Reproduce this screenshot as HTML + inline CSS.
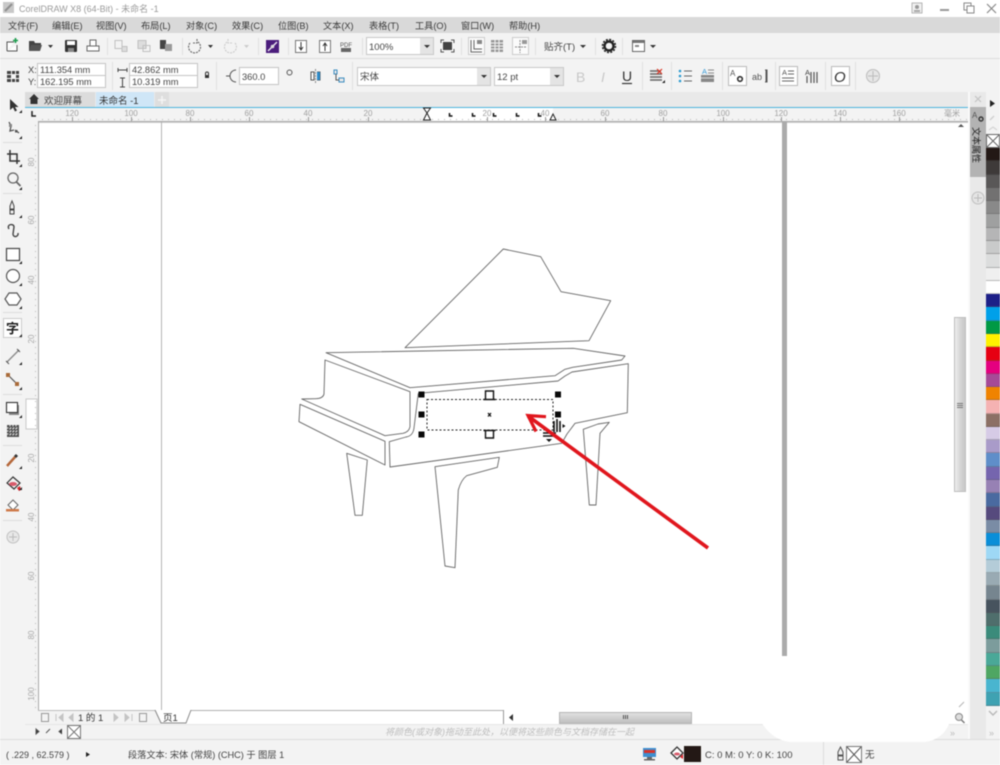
<!DOCTYPE html>
<html><head><meta charset="utf-8"><title>CorelDRAW X8</title>
<style>
html,body{margin:0;padding:0;width:1000px;height:765px;overflow:hidden;background:#fff}
#w{position:absolute;left:0;top:0;width:1000px;height:765px;filter:blur(.5px)}
svg{position:absolute;left:0;top:0}
svg text{font-family:"Liberation Sans","Noto Sans CJK SC",sans-serif}
#p{position:absolute;left:986px;top:148px;width:14px;height:558px;display:flex;flex-direction:column}
#p div{flex:1;box-sizing:border-box;border-bottom:1px solid rgba(90,90,90,.35)}
</style></head><body><div id="w">
<svg width="1000" height="765" viewBox="0 0 1000 765">
<!-- chrome backgrounds -->
<rect width="1000" height="17" fill="#fff"/>
<rect y="17" width="1000" height="16" fill="#d9d9d9"/>
<rect y="33" width="1000" height="59" fill="#f3f3f3"/>
<line x1="0" x2="1000" y1="58.5" y2="58.5" stroke="#dcdcdc"/>
<rect y="92" width="970" height="15" fill="#e9e9e9"/>
<rect y="92" x="0" width="25" height="650" fill="#f3f3f3"/>
<rect x="25" y="107" width="945" height="1" fill="#4db5de"/>
<rect x="25" y="108" width="945" height="14" fill="#f3f3f3"/>
<rect x="25" y="108" width="13" height="616" fill="#f3f3f3"/>
<rect x="38" y="121" width="930" height="1" fill="#a8a8a8"/>
<rect x="38" y="122" width="930" height="1" fill="#cfcfcf"/>
<rect x="38" y="122" width="1" height="588" fill="#a8a8a8"/>
<!-- title bar -->
<rect x="3" y="2" width="11" height="11" fill="#c8c8c8"/><path d="M5 11L12 4" stroke="#8f8f8f" stroke-width="2"/>
<text x="19" y="12" font-size="9" fill="#9a9a9a">CorelDRAW X8 (64-Bit) - 未命名 -1</text>
<rect x="912" y="3" width="10" height="10" fill="#f0f0f0" stroke="#b5b5b5"/><circle cx="917" cy="7" r="2" fill="#999"/><rect x="914" y="10" width="6" height="2" fill="#aaa"/>
<rect x="940" y="9" width="9" height="2" fill="#999"/>
<rect x="964" y="3" width="7" height="7" fill="none" stroke="#888"/><rect x="967" y="6" width="7" height="7" fill="#fff" stroke="#888"/>
<path d="M987 4l9 9M996 4l-9 9" stroke="#888" stroke-width="1.200"/>
<!-- menu -->
<g font-size="9.200" fill="#3a3a3a">
<text x="8" y="29">文件(F)</text><text x="52" y="29">编辑(E)</text><text x="96" y="29">视图(V)</text><text x="141" y="29">布局(L)</text><text x="186" y="29">对象(C)</text><text x="232" y="29">效果(C)</text><text x="278" y="29">位图(B)</text><text x="323" y="29">文本(X)</text><text x="369" y="29">表格(T)</text><text x="415" y="29">工具(O)</text><text x="461" y="29">窗口(W)</text><text x="509" y="29">帮助(H)</text>
</g>
<!-- std toolbar -->
<g stroke="#e0e0e0"><path d="M107.500 38V55M182.500 38V55M258.500 38V55M288.500 38V55M362.500 38V55M461.500 38V55M535.500 38V55M595.500 38V55M622.500 38V55"/></g>
<path d="M7 51V42h7M7 51h10V45" fill="#fff" stroke="#555"/><path d="M15.500 38v5M13 40.500h5" stroke="#1a9b4c" stroke-width="1.600"/>
<path d="M29 51V41h5l1 2h6v2h-9l-1 6z" fill="#444"/><path d="M29 51l2-6h11l-2 6z" fill="#555"/><path d="M48 45h5l-2.500 3z" fill="#333"/>
<rect x="65" y="40" width="12" height="12" rx="1" fill="#333"/><rect x="67" y="41" width="8" height="4" fill="#fff"/><rect x="68" y="48" width="6" height="4" fill="#888"/>
<path d="M90 46V40h6v6M87 46h12v5H87z" fill="#fff" stroke="#666"/>
<g fill="none" stroke="#c0c0c0"><rect x="115" y="40.500" width="7" height="8"/><rect x="122" y="46.500" width="5" height="5" fill="#ddd"/><rect x="138" y="40.500" width="8" height="8" fill="#ddd"/><rect x="143" y="45.500" width="7" height="6"/></g>
<rect x="160" y="40" width="6" height="9" fill="#444"/><rect x="165" y="44" width="7" height="7" fill="#999"/>
<path d="M190 43a6 6 0 1 0 8-1M197 39v4h-4" fill="none" stroke="#666" stroke-width="1.100" stroke-dasharray="2 1"/><path d="M208 45h5l-2.500 3z" fill="#333"/>
<path d="M235 43a6 6 0 1 1-8-1M228 39v4h4" fill="none" stroke="#ccc" stroke-width="1.100" stroke-dasharray="2 1"/><path d="M244 45h5l-2.500 3z" fill="#ccc"/>
<rect x="266" y="40" width="13" height="13" fill="#4b1d7c"/><path d="M268 51l9-9" stroke="#e8e2ef" stroke-width="1.500"/><circle cx="272.500" cy="46.500" r="1.800" fill="#ddd"/>
<g fill="#fff" stroke="#777"><rect x="295.500" y="40.500" width="11" height="12"/><rect x="319.500" y="40.500" width="11" height="12"/></g>
<path d="M301 42v7M299 47l2 3 2-3M325 51v-7M323 46l2-3 2 3" stroke="#333" fill="none"/>
<text x="340" y="47" font-size="6" fill="#555">PDF</text><rect x="341" y="48" width="10" height="4" fill="#666"/>
<rect x="366.500" y="37.500" width="67" height="17" fill="#fff" stroke="#c8c8c8"/><rect x="420" y="38" width="13" height="16" fill="#e4e4e4"/><path d="M424 45h6l-3 3z" fill="#333"/>
<text x="369" y="50" font-size="9.500" fill="#444">100%</text>
<rect x="443" y="42" width="9" height="8" fill="#444"/><path d="M441 43v-3h3M451 40h3v3M454 49v3h-3M444 52h-3v-3" fill="none" stroke="#555"/>
<rect x="468.500" y="37.500" width="16" height="17" fill="#fbfbfb" stroke="#ccc"/><path d="M471 40v12h11M474 40v9h8" stroke="#666" fill="none"/><rect x="477" y="40" width="5" height="4" fill="#888"/>
<path d="M491 40h12v12h-12z" fill="#999"/><path d="M491 43h12M491 46h12M491 49h12M495 40v12M499 40v12" stroke="#f3f3f3"/>
<rect x="512.500" y="37.500" width="16" height="17" fill="#fbfbfb" stroke="#ccc"/><path d="M520 40v13M515 47h11" stroke="#888" fill="none" stroke-dasharray="2 1"/><rect x="522" y="40" width="5" height="4" fill="#999"/>
<text x="544" y="50" font-size="9.500" fill="#444">贴齐(T)</text><path d="M580 45h6l-3 3z" fill="#333"/>
<circle cx="609" cy="46" r="4.500" fill="none" stroke="#222" stroke-width="2.400"/><circle cx="609" cy="46" r="6.500" fill="none" stroke="#222" stroke-width="1.500" stroke-dasharray="2 1.400"/>
<rect x="632.500" y="40.500" width="12" height="11" fill="#fff" stroke="#666"/><rect x="633" y="41" width="11" height="2" fill="#777"/><rect x="635" y="45" width="4" height="2" fill="#888"/><path d="M650 45h6l-3 3z" fill="#333"/>
<!-- property bar -->
<g stroke="#e0e0e0"><path d="M112.500 62V90M216.500 62V90M352.500 62V90M642.500 62V90M671.500 62V90M722.500 62V90M775.500 62V90M825.500 62V90M855.500 62V90"/></g>
<g fill="#444"><rect x="7" y="71" width="4" height="3"/><rect x="12" y="71" width="3" height="3"/><rect x="16" y="71" width="3" height="3"/><rect x="7" y="75" width="4" height="3"/><rect x="16" y="75" width="3" height="3"/><rect x="7" y="79" width="4" height="3"/><rect x="12" y="79" width="3" height="3"/><rect x="16" y="79" width="3" height="3"/></g>
<g fill="#fff" stroke="#c4c4c4"><rect x="37.500" y="63.500" width="68" height="12"/><rect x="37.500" y="75.500" width="68" height="12"/><rect x="129.500" y="63.500" width="68" height="12"/><rect x="129.500" y="75.500" width="68" height="12"/><rect x="239.500" y="67.500" width="39" height="17"/></g>
<g font-size="9.300" fill="#444"><text x="28" y="73">X:</text><text x="28" y="85">Y:</text><text x="40" y="73">111.354 mm</text><text x="40" y="85">162.195 mm</text><text x="132" y="73">42.862 mm</text><text x="132" y="85">10.319 mm</text><text x="242" y="80">360.0</text></g>
<path d="M118 70h9M118 68v4M127 68v4M122.500 78v9M120 78h5M120 87h5" stroke="#444" fill="none"/>
<rect x="205" y="75" width="4" height="3" fill="#333"/><path d="M205.500 75v-1.500a1.500 1.500 0 0 1 3 0V75" stroke="#333" fill="none"/>
<path d="M236 70a6 6 0 1 0 0 12" fill="none" stroke="#555"/><path d="M226 76h4" stroke="#555"/>
<circle cx="289.500" cy="72.500" r="2.500" fill="none" stroke="#555"/>
<path d="M311 72h3v8h-3zM317 72h3v8h-3" fill="#fff" stroke="#555"/><rect x="317" y="72" width="3" height="8" fill="#2b89c8"/><path d="M315.500 69v14" stroke="#888" stroke-dasharray="2 1"/>
<path d="M334 70h3v4h-3zM339 78h5v4h-5z" fill="#e8e8e8" stroke="#3b8cc0"/><path d="M336 74v6h3" stroke="#555" fill="none"/>
<rect x="357.500" y="67.500" width="133" height="18" fill="#fff" stroke="#c8c8c8"/><rect x="477" y="68" width="13" height="17" fill="#e4e4e4"/><path d="M481 75h6l-3 3z" fill="#333"/>
<text x="360" y="80" font-size="9.500" fill="#444">宋体</text>
<rect x="494.500" y="67.500" width="69" height="18" fill="#fff" stroke="#c8c8c8"/><rect x="550" y="68" width="13" height="17" fill="#e4e4e4"/><path d="M554 75h6l-3 3z" fill="#333"/>
<text x="497" y="80" font-size="9.500" fill="#444">12 pt</text>
<text x="576" y="82" font-size="14" fill="#c8c8c8">B</text>
<text x="601" y="82" font-size="14" fill="#c8c8c8" font-style="italic">I</text>
<text x="622" y="81" font-size="14" fill="#333">U</text><path d="M622 83.500h10" stroke="#333" stroke-width="1.200"/>
<path d="M650 71h11M650 74h12M650 77h12M650 80h12" stroke="#666" stroke-width="1.500"/><path d="M657 69l5 5M662 69l-5 5" stroke="#d32" stroke-width="1.200"/><path d="M662 83l3-3v3z" fill="#222"/>
<circle cx="680" cy="71" r="1.300" fill="#2b9ad0"/><circle cx="680" cy="76" r="1.300" fill="#2b9ad0"/><circle cx="680" cy="81" r="1.300" fill="#2b9ad0"/><path d="M684 71h8M684 76h8M684 81h8" stroke="#666"/>
<text x="702" y="74" font-size="7.500" fill="#3a9bd6">A</text><path d="M708 70h6M708 73h6" stroke="#888"/><rect x="701" y="75" width="13" height="7" fill="#888"/><path d="M701 78h13" stroke="#ddd"/>
<rect x="728.500" y="66.500" width="18" height="19" fill="#fff" stroke="#bbb"/><text x="730" y="76" font-size="8" fill="#555">A</text><circle cx="740" cy="79" r="2.300" fill="none" stroke="#333" stroke-width="1.600"/>
<text x="752" y="80" font-size="9" fill="#555">ab</text><path d="M765 70h2v12h-2M766 70v12" stroke="#555" fill="none"/>
<rect x="779.500" y="66.500" width="18" height="19" fill="#fff" stroke="#bbb"/><text x="782" y="75" font-size="7.500" fill="#555">A</text><path d="M788 71h6M788 74h6M782 78h12M782 81h12" stroke="#666"/>
<text x="805" y="75" font-size="7.500" fill="#444">A</text><path d="M807 76v7M811 72v11M814 72v11M817 72v11" stroke="#555" stroke-width="1.200"/>
<rect x="831.500" y="66.500" width="18" height="19" fill="#fff" stroke="#bbb"/><text x="834" y="82" font-size="15" fill="#333" font-style="italic">O</text>
<circle cx="873" cy="76" r="6.500" fill="#e6e6e6" stroke="#bcbcbc"/><path d="M873 71v10M868 76h10" stroke="#bcbcbc"/>
<!-- tabs -->
<rect x="25" y="92" width="70" height="15" fill="#dcdcdc"/><rect x="96" y="92" width="58" height="15" fill="#cfe6f7"/><rect x="155" y="92" width="14" height="15" fill="#dedede"/>
<path d="M29 99l5-5 5 5h-1.500v5h-7v-5z" fill="#333"/>
<text x="44" y="104" font-size="9.500" fill="#444">欢迎屏幕</text><text x="99" y="104" font-size="9.500" fill="#333">未命名 -1</text><path d="M162 96v8M158 100h8" stroke="#f5f5f5" stroke-width="1.500"/>
<!-- rulers -->
<path d="M32 111v5h4" stroke="#222" stroke-width="1.500" fill="none"/>
<rect x="427" y="108" width="126" height="13" fill="#fff"/>
<g font-size="8" fill="#a0a0a0" text-anchor="middle"><text x="72" y="116">120</text><text x="131" y="116">100</text><text x="190" y="116">80</text><text x="249" y="116">60</text><text x="308" y="116">40</text><text x="368" y="116">20</text><text x="487" y="116">20</text><text x="545" y="116">40</text><text x="605" y="116">60</text><text x="663" y="116">80</text><text x="723" y="116">100</text><text x="781" y="116">120</text><text x="840" y="116">140</text><text x="899" y="116">160</text><text x="952" y="116">毫米</text></g>
<path d="M42 119.500H968" stroke="#b8b8b8" stroke-dasharray="1 5" fill="none"/>
<path d="M72.500 117v4M131.500 117v4M190.500 117v4M249.500 117v4M308.500 117v4M368.500 117v4M487.500 117v4M545.500 117v4M605.500 117v4M663.500 117v4M723.500 117v4M781.500 117v4M840.500 117v4M899.500 117v4" stroke="#999"/>
<rect x="783" y="121" width="4" height="2" fill="#aaa"/>
<path d="M423.500 108h7l-3.500 5zM427 113l-3.500 7h7z" fill="#fff" stroke="#222"/>
<path d="M550 120l3-6 3 6z" fill="#fff" stroke="#222"/>
<g stroke="#111" stroke-width="1.500" fill="none"><path d="M449.500 113v3h3M472.500 113v3h3M493.500 113v3h3M516.500 113v3h3M538.500 113v3h3"/></g>
<rect x="26" y="399" width="11" height="30" fill="#fff" stroke="#c8c8c8"/>
<g font-size="8" fill="#a8a8a8" text-anchor="middle">
<text transform="translate(34,162) rotate(-90)">80</text><text transform="translate(34,220) rotate(-90)">60</text><text transform="translate(34,280) rotate(-90)">40</text><text transform="translate(34,339) rotate(-90)">20</text><text transform="translate(34,458) rotate(-90)">20</text><text transform="translate(34,517) rotate(-90)">40</text><text transform="translate(34,576) rotate(-90)">60</text><text transform="translate(34,635) rotate(-90)">80</text><text transform="translate(34,694) rotate(-90)">100</text></g>
<path d="M35.500 125V708" stroke="#bbb" stroke-dasharray="1 5" fill="none"/>
<!-- page -->
<rect x="161" y="122" width="1" height="588" fill="#b4b4b4"/>
<rect x="782" y="122" width="5" height="534" fill="#ababab"/>
<!-- toolbox -->
<g stroke="#dcdcdc"><path d="M3 142.500h19M3 193.500h19M3 312.500h19M3 394.500h19M3 445.500h19M3 520.500h19"/></g>
<path d="M10 99l0 11 3-2.500 2 4 2-1-2-3.500h3.500z" fill="#333"/>
<path d="M9 122l2 4-1 5 4-1M15 130l4 3" stroke="#555" fill="none" stroke-width="1.300"/><rect x="9" y="124" width="3" height="3" fill="#888"/><rect x="15" y="130" width="2.500" height="2.500" fill="#555"/>
<path d="M10 150v11h10M7 154h10v10" stroke="#333" fill="none" stroke-width="1.500"/>
<circle cx="13" cy="178" r="5" fill="none" stroke="#666" stroke-width="1.300"/><path d="M16.500 182l4 4" stroke="#666" stroke-width="1.800"/>
<path d="M10 206l2-5 2 5v3h-4zM10 210h4v4h-4z" fill="#eee" stroke="#444"/>
<path d="M9 229c-3-5 5-6 5-2l-1 7c0 4 6 3 5-1" fill="none" stroke="#444" stroke-width="1.400"/>
<rect x="6.500" y="248.500" width="13" height="12" fill="#fff" stroke="#444" stroke-width="1.200"/>
<circle cx="13" cy="276" r="6.500" fill="#fff" stroke="#555" stroke-width="1.200"/>
<path d="M9 293h8l4 6-4 6H9l-4-6z" fill="#fff" stroke="#555" stroke-width="1.200"/>
<rect x="3.500" y="318.500" width="18" height="19" fill="#fff" stroke="#ccc"/><text x="6" y="333" font-size="13" fill="#222" font-weight="bold">字</text>
<path d="M7 362l12-12" stroke="#888" stroke-width="1.300"/><path d="M6 361l3 3M17 349l3 3" stroke="#555"/>
<path d="M8 375l9 9" stroke="#555" stroke-width="1.200"/><rect x="6" y="373" width="4" height="4" fill="#a96b3a"/><rect x="15" y="382" width="4" height="4" fill="#a96b3a"/>
<rect x="9" y="405" width="10" height="10" fill="#888"/><rect x="6.500" y="402.500" width="11" height="10" fill="#fff" stroke="#333" stroke-width="1.100"/>
<rect x="7" y="425" width="12" height="12" fill="#555"/><path d="M7 428h12M7 431h12M7 434h12M10 425v12M13 425v12M16 425v12" stroke="#ddd" stroke-dasharray="1.500 1.500"/>
<path d="M7 466l8-9" stroke="#b5673a" stroke-width="2.500"/><path d="M15 457l2-2" stroke="#333" stroke-width="3"/>
<path d="M7 483l6-6 7 6-6 6z" fill="#f3f3f3" stroke="#333" stroke-width="1.200"/><ellipse cx="13" cy="484" rx="4" ry="2" fill="#d85a6a"/><path d="M17 488l3-2 1 4-2 1z" fill="#d8232a"/>
<path d="M8 505l5-5 5 5-5 5z" fill="#fff" stroke="#666"/><rect x="6" y="509" width="13" height="2.500" fill="#cf7a4a"/>
<circle cx="13" cy="537" r="6" fill="#e8e8e8" stroke="#c0c0c0"/><path d="M13 533v8M9 537h8" stroke="#bbb"/>
<g fill="#222"><path d="M22 110v3h-3zM22 136v3h-3zM22 164v3h-3zM22 187v3h-3zM22 215v3h-3zM22 261v3h-3zM22 283v3h-3zM22 306v3h-3zM22 334v3h-3zM22 362v3h-3zM22 387v3h-3zM22 415v3h-3zM22 466v3h-3zM22 487v3h-3z"/></g>
<!-- piano -->
<g fill="none" stroke="#666" stroke-width=".9" stroke-linejoin="round">
<path d="M503.300 249L540.700 256.700 561 291.700 610.700 300.700 589 340.700 405 347.700Z"/>
<path d="M326 352.700L573.300 348.300 625 356 621.700 360 572.700 367.300 565 369.300 555 375.700 410 387.700Z"/>
<path d="M325 360L410 391.700V426.700Q409 432 403 433.300L385 435.700 301.700 399 316 398.700Q323 398.500 324 394Z"/>
<path d="M300 404.300L385 441.300V465L299 421.700Z"/>
<path d="M418.300 393.300L414 428Q413 436 406 437L389.300 441.700 390 467 561.700 443.300 567 434 575 423.300 627.300 412.700 628.300 363.700 572 372 565 376 558 381 418.300 393.300"/>
<path d="M346.700 453.300L367.300 460 362.300 515.300H355Z"/>
<path d="M435 466.700L499.300 457.300 497.300 467.300 466.700 475.700Q461 480 458.300 490L455 567.700 445 566Z"/>
<path d="M583.300 429.300L598 424 609.300 422.300 600 433.300 596 505H589.300Z"/>
</g>
<!-- selection -->
<rect x="427" y="399.500" width="126" height="30.500" fill="none" stroke="#222" stroke-dasharray="2 2"/>
<g fill="#0a0a0a"><rect x="418.500" y="391.500" width="6" height="6"/><rect x="418.500" y="411.500" width="6" height="6"/><rect x="418.500" y="431.500" width="6" height="6"/><rect x="555" y="391.500" width="6" height="6"/><rect x="555" y="411.500" width="6" height="6"/></g>
<path d="M488 413l3 3.500M491 413l-3 3.500" stroke="#111" stroke-width="1.300"/>
<path d="M485.500 399.500V391h8v8.500M483.500 399.500h12M483.500 430.500h12M485.500 430.500V438h8v-7.500" fill="#fff" stroke="#111" stroke-width="1.400"/>
<path d="M554 421v11M557 419v13M560 421v11" stroke="#111" stroke-width="1.600"/><path d="M562.500 424l3 2-3 2z" fill="#111"/>
<path d="M543 433h13M543 436h13" stroke="#111" stroke-width="1.500"/><path d="M546 439h6l-3 3z" fill="#111"/>
<!-- red arrow -->
<path d="M708 548L528 416" stroke="#e0161d" stroke-width="3.600" fill="none"/>
<path d="M546 416.700L528 415.500 536 431.500" stroke="#e0161d" stroke-width="3.200" fill="none"/>
<!-- right scroll + dock -->
<rect x="968" y="92" width="32" height="648" fill="#f3f3f3"/>
<rect x="968" y="92" width="2" height="648" fill="#fafafa"/>
<rect x="970" y="92" width="16" height="648" fill="#e9e9e9"/>
<rect x="970" y="107" width="16" height="70" fill="#b3b3b3"/>
<path d="M975 96l6 6M981 96l-6 6" stroke="#c4c4c4" stroke-width="1.200"/>
<text x="972" y="118" font-size="8" fill="#555">A</text><circle cx="981" cy="119" r="2" fill="none" stroke="#333" stroke-width="1.400"/>
<text transform="translate(973,127) rotate(90)" font-size="9" fill="#222">文本属性</text>
<circle cx="978" cy="198" r="6" fill="#e4e4e4" stroke="#bfbfbf"/><path d="M978 194v8M974 198h8" stroke="#bbb"/>
<path d="M990 100l5 3.500-5 3.500z" fill="#222"/>
<path d="M990 120l4-4" stroke="#d0d0d0" stroke-width="1.500"/>
<path d="M989 130l4-3 4 3" stroke="#d5d5d5" fill="none" stroke-width="1.200"/>
<rect x="986.500" y="134.500" width="13" height="13" fill="#fff" stroke="#666"/><path d="M987 135l12 12M999 135l-12 12" stroke="#666"/>
<path d="M989 711l4 4 4-4" stroke="#b8b8b8" fill="none" stroke-width="1.400"/><text x="989" y="736" font-size="9" fill="#bbb">»</text>
<defs><linearGradient id="g" x1="0" x2="1" y1="0" y2="0"><stop offset="0" stop-color="#f0f0f0"/><stop offset=".6" stop-color="#d2d2d2"/><stop offset="1" stop-color="#c8c8c8"/></linearGradient>
<linearGradient id="h" x1="0" x2="0" y1="0" y2="1"><stop offset="0" stop-color="#e2e2e2"/><stop offset="1" stop-color="#bdbdbd"/></linearGradient></defs>
<rect x="954.500" y="317.500" width="11" height="174" fill="url(#g)" stroke="#bdbdbd"/>
<path d="M957 403.500h6M957 405.500h6M957 407.500h6" stroke="#777" fill="none"/>
<path d="M958 127l3-3 3 3z" fill="#555"/>
<!-- bottom -->
<rect x="25" y="710" width="136" height="14" fill="#f3f3f3"/>
<rect x="161" y="710" width="342" height="1" fill="#b0b0b0"/>
<rect x="503" y="710" width="1" height="14" fill="#999"/>
<rect x="38" y="710" width="123" height="1" fill="#bdbdbd"/>
<g fill="none" stroke="#999"><rect x="41.500" y="713.500" width="7" height="8"/><rect x="139.500" y="713.500" width="7" height="8"/></g>
<path d="M56 714v7M63 714l-4 3.500 4 3.500zM73 714l-4 3.500 4 3.500zM114 714l4 3.500-4 3.500zM125 714l4 3.500-4 3.500zM132 714v7" fill="#c4c4c4" stroke="#c4c4c4"/>
<text x="78" y="721" font-size="9.500" fill="#333">1 的 1</text>
<path d="M155 710l6 13h25l5-13" fill="#fff" stroke="#888"/><text x="163" y="721" font-size="9.500" fill="#333">页1</text>
<path d="M513 714v7l-4-3.500z" fill="#333"/>
<rect x="559.500" y="712.500" width="132" height="11" fill="url(#h)" stroke="#b5b5b5"/><path d="M623.500 715v4M625.500 715v4M627.500 715v4" stroke="#555"/>
<rect x="0" y="724" width="968" height="15" fill="#f3f3f3"/>
<rect x="25" y="724" width="943" height="1" fill="#e6e6e6"/>
<rect y="739" width="1000" height="26" fill="#f3f3f3"/>
<rect y="739" width="1000" height="1" fill="#dcdcdc"/>
<path d="M36 729l3 2.500-3 2.500zM46 733l4-4M62 729l-3 2.500 3 2.500" fill="#333" stroke="#555"/>
<rect x="67.500" y="725.500" width="13" height="13" fill="#fff" stroke="#777"/><path d="M68 726l12 12M80 726l-12 12" stroke="#777"/>
<text x="385" y="735" font-size="9" fill="#bdbdbd" font-style="italic">将颜色(或对象)拖动至此处，以便将这些颜色与文档存储在一起</text>
<text x="6" y="758" font-size="9" fill="#444">( .229 , 62.579 )</text>
<path d="M86 752l4 2.500-4 2.500z" fill="#222"/>
<text x="128" y="758" font-size="9.200" fill="#444">段落文本: 宋体 (常规) (CHC) 于 图层 1</text>
<rect x="643" y="748" width="13" height="9" fill="#3d8fd0"/><rect x="644" y="750" width="11" height="3" fill="#d8322a"/><rect x="647" y="757" width="5" height="2" fill="#666"/><rect x="644" y="759" width="11" height="1.500" fill="#666"/>
<path d="M671 753l6-6 6 6-6 6z" fill="#fff" stroke="#333" stroke-width="1.300"/><path d="M680 757l3-3v5z" fill="#d8232a"/><ellipse cx="677" cy="754" rx="3" ry="1.500" fill="#d85a6a"/>
<rect x="684" y="746" width="17" height="16" fill="#231815"/>
<text x="705" y="758" font-size="9.500" fill="#444">C: 0 M: 0 Y: 0 K: 100</text>
<path d="M823.500 741V765" stroke="#dcdcdc"/>
<path d="M838 752l2.500-5 2.500 5v3h-5zM838 756h5v4h-5z" fill="#eee" stroke="#555"/>
<rect x="846.500" y="746.500" width="15" height="16" fill="#fff" stroke="#777"/><path d="M847 747l14 15M861 747l-14 15" stroke="#555"/>
<text x="865" y="758" font-size="9.500" fill="#444">无</text>
<!-- erased watermark -->
<path d="M756 712C762 726 772 740 790 742H925C940 740 950 730 952 712V700H756Z" fill="#fff"/>
<path d="M959 707l5-5" stroke="#bbb" stroke-width="1.200"/>
<circle cx="959" cy="717" r="3.500" fill="#ddd" stroke="#888"/><path d="M961.500 720l3 3" stroke="#777" stroke-width="1.400"/>
<text x="950" y="736" font-size="9" fill="#bbb">»</text>
</svg>
<div id="p">
<div style="background:#231815"></div><div style="background:#3e3a39"></div><div style="background:#595757"></div><div style="background:#727171"></div><div style="background:#898989"></div><div style="background:#9fa0a0"></div><div style="background:#b5b5b6"></div><div style="background:#c9caca"></div><div style="background:#dcdddd"></div><div style="background:#efefef"></div><div style="background:#ffffff"></div><div style="background:#1d2088"></div><div style="background:#00a0e9"></div><div style="background:#009944"></div><div style="background:#fff100"></div><div style="background:#e60012"></div><div style="background:#e4007f"></div><div style="background:#a64a97"></div><div style="background:#f08300"></div><div style="background:#f5b2b2"></div><div style="background:#8c7065"></div><div style="background:#d6cbe6"></div><div style="background:#a99bc9"></div><div style="background:#5f8ec9"></div><div style="background:#7565ae"></div><div style="background:#9781b4"></div><div style="background:#4a6aa0"></div><div style="background:#564a7d"></div><div style="background:#7a8ca5"></div><div style="background:#0a8ed8"></div><div style="background:#9ed8f5"></div><div style="background:#b4ccd8"></div><div style="background:#99aab3"></div><div style="background:#76858f"></div><div style="background:#47535e"></div><div style="background:#4f6e6c"></div><div style="background:#3b8b7b"></div><div style="background:#7c9c9c"></div><div style="background:#4aa898"></div><div style="background:#4fa663"></div><div style="background:#49b5cf"></div><div style="background:#3fa2b2"></div>
</div>
</div></body></html>
